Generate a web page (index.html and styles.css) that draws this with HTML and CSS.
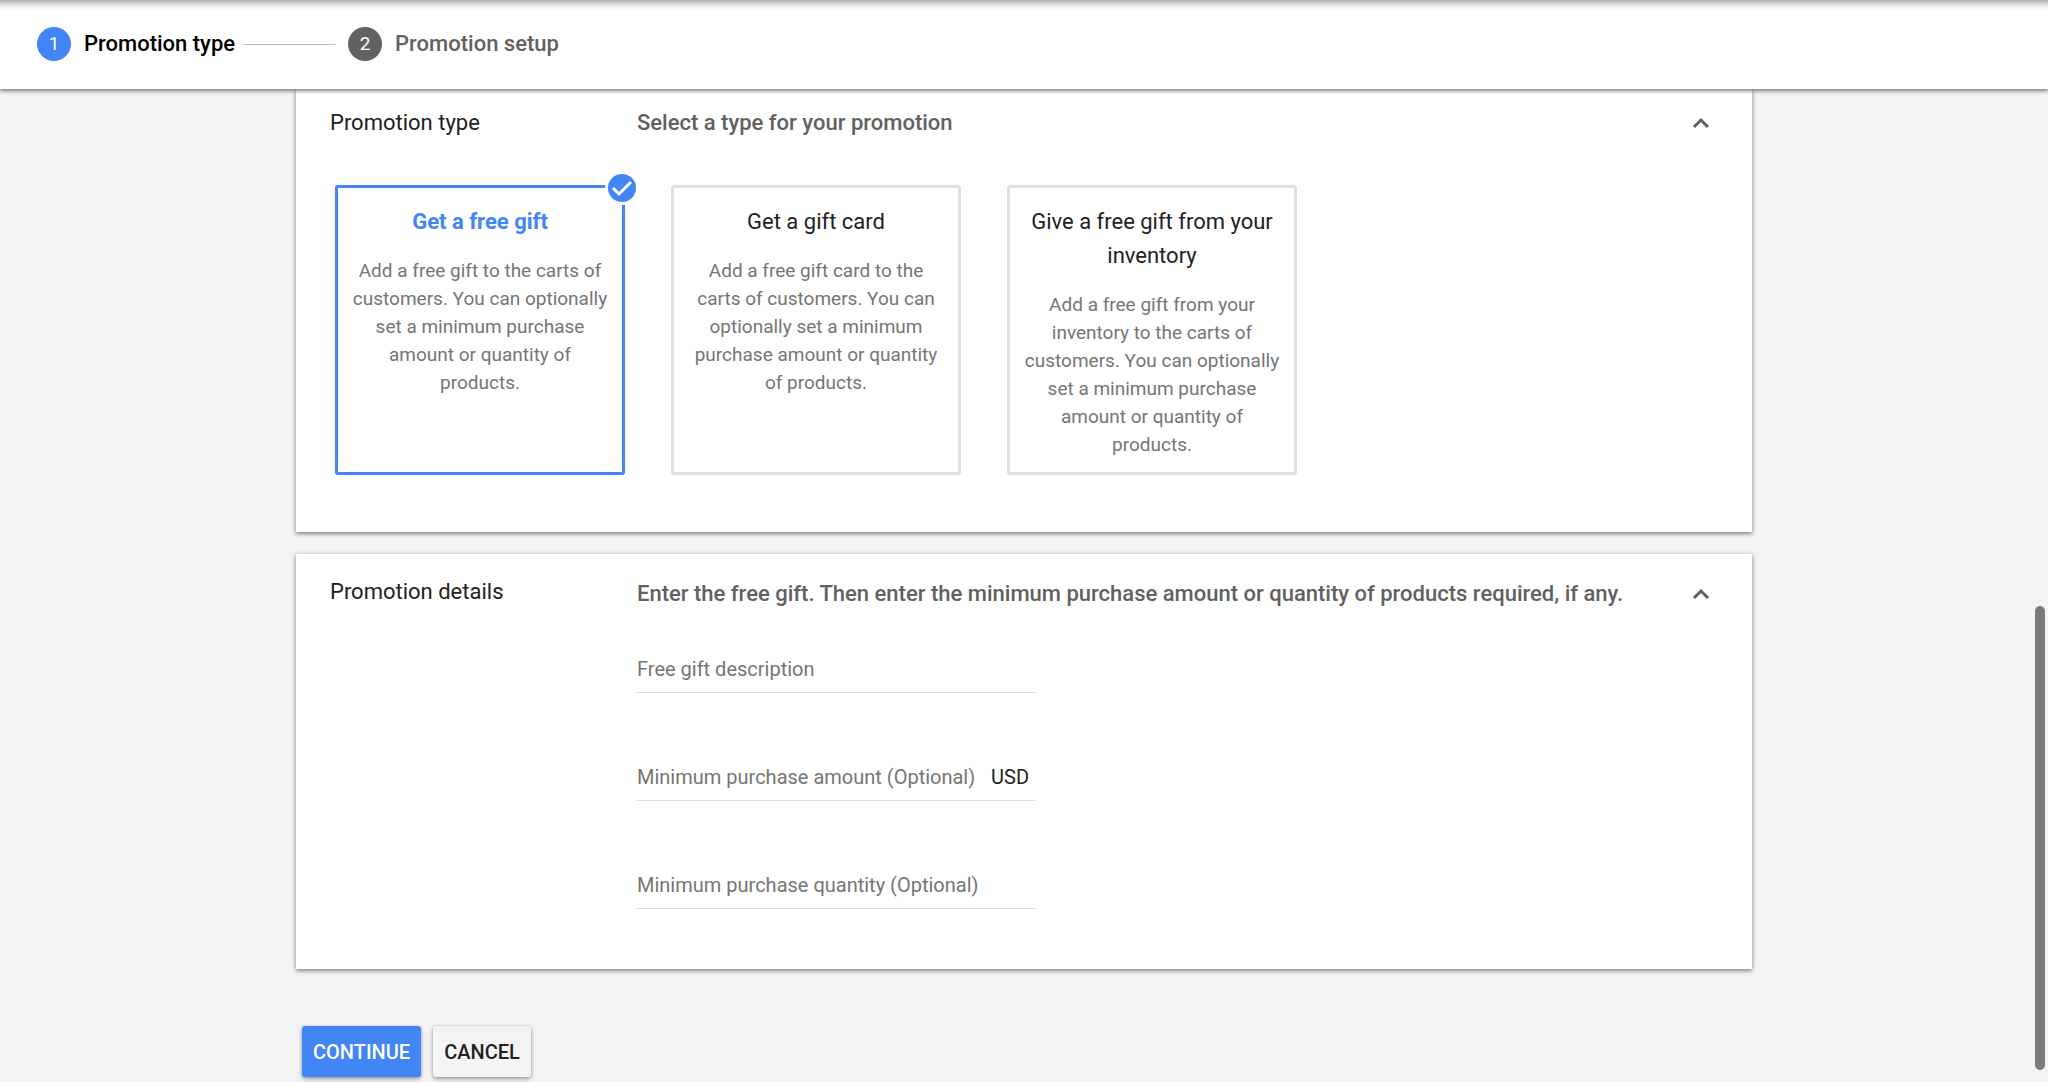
FILE: index.html
```html
<!DOCTYPE html>
<html lang="en">
<head>
<meta charset="utf-8">
<meta name="viewport" content="width=device-width, initial-scale=1">
<title>Promotion type</title>
<link rel="stylesheet" href="styles.css">
</head>
<body>
<header class="stepper">
  <ol class="steps">
    <li class="step step-active" aria-current="step"><span class="step-number">1</span><span class="step-name">Promotion type</span></li>
    <li class="step"><span class="step-number">2</span><span class="step-name">Promotion setup</span></li>
  </ol>
</header>

<form class="content">
  <section class="card">
    <div class="card-header">
      <h2 class="card-title">Promotion type</h2>
      <p class="card-hint">Select a type for your promotion</p>
      <button class="collapse" type="button" aria-label="Collapse" aria-expanded="true">
        <svg class="chevron" viewBox="0 0 18 12" aria-hidden="true"><path d="M2 10l7-7 7 7"/></svg>
      </button>
    </div>
    <div class="types">
      <label class="type">
        <input class="type-input" type="radio" name="type" checked>
        <span class="type-name">Get a free gift</span>
        <span class="type-text">Add a free gift to the carts of customers. You can optionally set a minimum purchase amount or quantity of products.</span>
        <svg class="type-check" viewBox="0 0 34 34" aria-hidden="true"><circle class="check-ring" cx="17" cy="17" r="17"/><circle class="check-disc" cx="17" cy="17" r="14"/><path class="check-mark" d="M8 17l6 6L26 11"/></svg>
      </label>
      <label class="type">
        <input class="type-input" type="radio" name="type">
        <span class="type-name">Get a gift card</span>
        <span class="type-text">Add a free gift card to the carts of customers. You can optionally set a minimum purchase amount or quantity of products.</span>
      </label>
      <label class="type">
        <input class="type-input" type="radio" name="type">
        <span class="type-name">Give a free gift from your inventory</span>
        <span class="type-text">Add a free gift from your inventory to the carts of customers. You can optionally set a minimum purchase amount or quantity of products.</span>
      </label>
    </div>
  </section>

  <section class="card card-details">
    <div class="card-header">
      <h2 class="card-title">Promotion details</h2>
      <p class="card-hint">Enter the free gift. Then enter the minimum purchase amount or quantity of products required, if any.</p>
      <button class="collapse" type="button" aria-label="Collapse" aria-expanded="true">
        <svg class="chevron" viewBox="0 0 18 12" aria-hidden="true"><path d="M2 10l7-7 7 7"/></svg>
      </button>
    </div>
    <div class="fields">
      <div class="field">
        <label class="field-label" for="gift">Free gift description</label>
        <input class="field-input" id="gift" type="text">
      </div>
      <div class="field">
        <label class="field-label" for="amount">Minimum purchase amount (Optional)</label>
        <input class="field-input" id="amount" type="text">
        <span class="field-unit">USD</span>
      </div>
      <div class="field">
        <label class="field-label" for="quantity">Minimum purchase quantity (Optional)</label>
        <input class="field-input" id="quantity" type="text">
      </div>
    </div>
  </section>

  <div class="actions">
    <button class="button button-primary" type="submit">CONTINUE</button>
    <button class="button" type="button">CANCEL</button>
  </div>
</form>
<div class="scroll-thumb"></div>
</body>
</html>
```
FILE: styles.css
```css
* { box-sizing: border-box; }

body {
  margin: 0;
  background: #f4f4f4;
  color: #212121;
  font-family: Roboto, "Liberation Sans", sans-serif;
  font-size: 22px;
  line-height: 34px;
  overflow: hidden;
}

/* Stepper bar */
.stepper {
  position: relative;
  z-index: 1;
  padding: 27px 37px 28px;
  background: #fff linear-gradient(#b0b0b0, #dcdcdc 4px, #f6f6f6 8px, #fff 12px);
  box-shadow: 0 2px 4px rgba(0, 0, 0, .5);
}

.steps {
  display: flex;
  margin: 0;
  padding: 0;
  list-style: none;
}

.step {
  display: flex;
  align-items: center;
  color: #616161;
  font-weight: 500;
}

.step + .step::before {
  content: "";
  width: 91px;
  height: 1px;
  margin: 0 13px 0 9px;
  background: #bdbdbd;
}

.step-number {
  width: 34px;
  height: 34px;
  margin-right: 13px;
  border-radius: 50%;
  background: #616161;
  color: #fff;
  font-size: 19px;
  font-weight: 400;
  text-align: center;
}

.step-active { color: #000; }
.step-active .step-number { background: #4285f4; }

/* Cards */
.content {
  max-width: 1456px;
  margin: 0 auto;
}

.card {
  padding: 17px 34px 57px;
  background: #fff;
  box-shadow: 0 2px 4px rgba(0, 0, 0, .4), 0 0 6px rgba(0, 0, 0, .14);
}

.card-header {
  display: grid;
  grid-template-columns: 307px 1fr 34px;
  align-items: center;
}

.card-title,
.card-hint {
  margin: 0;
  font-size: 22px;
  font-weight: 500;
}

.card-title { font-weight: 400; }
.card-hint { color: #616161; }

.collapse {
  height: 34px;
  padding: 0;
  border: 0;
  background: none;
}

.chevron {
  display: block;
  width: 18px;
  height: 12px;
  margin: 0 auto;
  fill: none;
  stroke: #616161;
  stroke-width: 3;
}

/* Promotion types */
.types {
  display: flex;
  gap: 46px;
  padding: 45px 5px 0;
}

.type {
  position: relative;
  display: flex;
  flex-direction: column;
  gap: 18px;
  width: 290px;
  min-height: 290px;
  padding: 17px 12px 0;
  border: 3px solid #e0e0e0;
  border-radius: 3px;
  text-align: center;
}

.type-input {
  position: absolute;
  opacity: 0;
}

.type-text {
  color: #757575;
  font-size: 19px;
  line-height: 28px;
}

.type:has(:checked) { border-color: #4285f4; }
.type:has(:checked) .type-name { color: #4285f4; font-weight: 700; }

.type-check {
  position: absolute;
  top: -17px;
  right: -17px;
  width: 34px;
  height: 34px;
}

.check-ring { fill: #fff; }
.check-disc { fill: #4285f4; }
.check-mark { fill: none; stroke: #fff; stroke-width: 3; }

/* Promotion details */
.card-details {
  margin-top: 22px;
  padding: 23px 34px 60px;
}

.card-details .card-title {
  align-self: start;
  line-height: 30px;
}

.fields {
  display: grid;
  gap: 66px;
  max-width: 705px;
  padding: 40px 0 0 307px;
}

.field {
  display: grid;
  grid-template-columns: 1fr auto;
  align-items: center;
  height: 42px;
  padding-bottom: 6px;
  border-bottom: 1px solid #dcdcdc;
  font-size: 20px;
}

.field-label,
.field-input { grid-area: 1 / 1; }

.field-label { color: #757575; }

.field-input {
  width: 100%;
  height: 34px;
  padding: 0;
  border: 0;
  outline: 0;
  background: none;
  color: #212121;
  font: inherit;
}

.field-unit { padding-right: 6px; }

/* Form buttons */
.actions {
  display: flex;
  gap: 12px;
  padding: 57px 6px;
}

.button {
  height: 51px;
  padding: 0 11px;
  border: 0;
  border-radius: 3px;
  background: #f4f4f4;
  box-shadow: 0 2px 4px rgba(0, 0, 0, .35), 0 0 3px rgba(0, 0, 0, .12);
  color: #212121;
  font: 500 20px/34px Roboto, "Liberation Sans", sans-serif;
}

.button-primary { background: #4285f4; color: #fff; }

/* Overlay scrollbar */
.scroll-thumb {
  position: fixed;
  top: 56vh;
  right: 3px;
  bottom: 12px;
  width: 10px;
  border-radius: 5px;
  background: #7b7b7b;
}
```
